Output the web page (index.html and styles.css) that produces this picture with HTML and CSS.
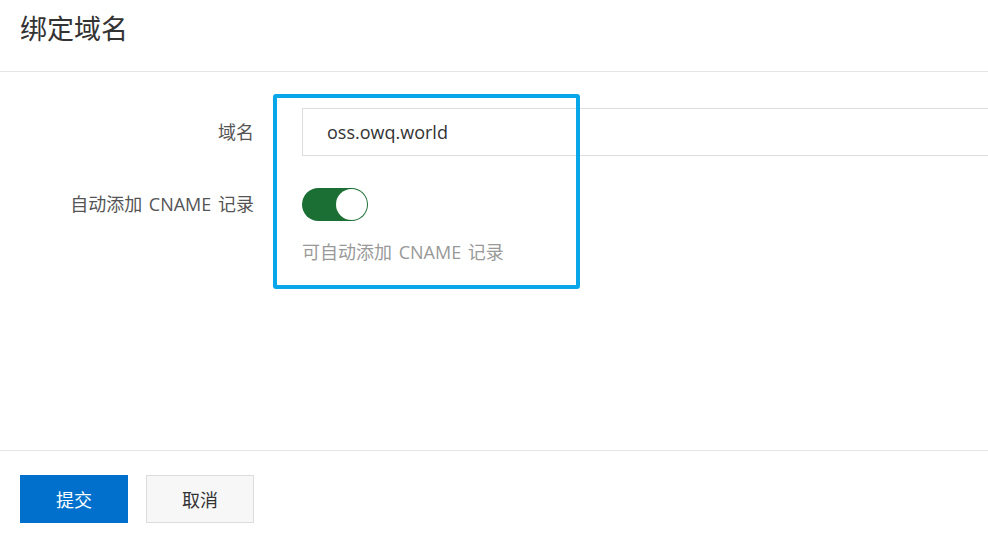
FILE: index.html
```html
<!DOCTYPE html>
<html>
<head>
<meta charset="UTF-8">
<link rel="stylesheet" href="styles.css">
<title>绑定域名</title>
</head>
<body>

<div class="dialog">
  <div class="dialog-head">
    <h1>绑定域名</h1>
  </div>

  <div class="dialog-body">
    <div class="form-row">
      <label class="form-label" for="domain">域名</label>
      <div class="form-control">
        <input id="domain" class="text-input" type="text" value="oss.owq.world">
      </div>
    </div>

    <div class="form-row form-row-switch">
      <label class="form-label">自动添加 CNAME 记录</label>
      <div class="form-control">
        <span class="switch switch-on"><span class="switch-knob"></span></span>
        <p class="form-help">可自动添加 CNAME 记录</p>
      </div>
    </div>

    <div class="highlight"></div>
  </div>

  <div class="dialog-foot">
    <button class="btn btn-primary">提交</button>
    <button class="btn">取消</button>
  </div>
</div>

</body>
</html>
```

FILE: styles.css
```css
html, body { margin: 0; padding: 0; }
body { color: #333333; background-color: #FFFFFF;
       font-family: "Open Sans", "Noto Sans CJK SC", sans-serif; }

.dialog { height: 536px; display: flex; flex-direction: column;
          overflow: hidden; }

.dialog-head { height: 72px; border-bottom: 1px solid #E5E5E5;
               padding-left: 20px; box-sizing: border-box; }
.dialog-head h1 { margin: 0; font-weight: normal; font-size: 27px;
                  line-height: 58px; color: #333333; }

.dialog-body { flex: 1; position: relative; padding-top: 36px; }

.form-row { display: flex; align-items: center; }
.form-label { width: 254px; text-align: right; font-size: 18px;
              line-height: 24px; color: #555555; flex: none;
              word-spacing: 2px; }
.form-control { margin-left: 48px; flex: 1; }

.text-input { display: block; box-sizing: border-box; width: 100%;
              height: 48px; border: 1px solid #DDDDDD; border-right: none;
              padding: 0 0 0 24px; font-family: inherit; font-size: 18px;
              color: #333333; outline: none; }

.form-row-switch { margin-top: 32px; align-items: flex-start; }
.form-row-switch .form-label { margin-top: 4px; }

.switch { display: block; position: relative; width: 66px; height: 33px;
          border-radius: 17px; background-color: #1B6E34; }
.switch-on .switch-knob { position: absolute; right: 1px; top: 1px;
                          width: 31px; height: 31px; border-radius: 50%;
                          background-color: #FFFFFF; }

.form-help { margin: 20px 0 0 0; font-size: 18px; line-height: 22px;
             color: #999999; word-spacing: 2px; }

/* annotation frame drawn over the form */
.highlight { position: absolute; left: 273px; top: 22px;
             width: 299px; height: 187px;
             border: 4.5px solid #0AA6EA; border-radius: 3px; }

.dialog-foot { height: 86px; border-top: 1px solid #E5E5E5;
               padding: 24px 0 0 20px; box-sizing: border-box;
               display: flex; gap: 18px; align-items: flex-start; }

.btn { width: 108px; height: 48px; font-family: inherit; font-size: 18px;
       color: #333333; background-color: #F7F7F7;
       border: 1px solid #DDDDDD; padding: 0; }
.btn-primary { color: #FFFFFF; background-color: #0070CC;
               border-color: #0070CC; }
```
